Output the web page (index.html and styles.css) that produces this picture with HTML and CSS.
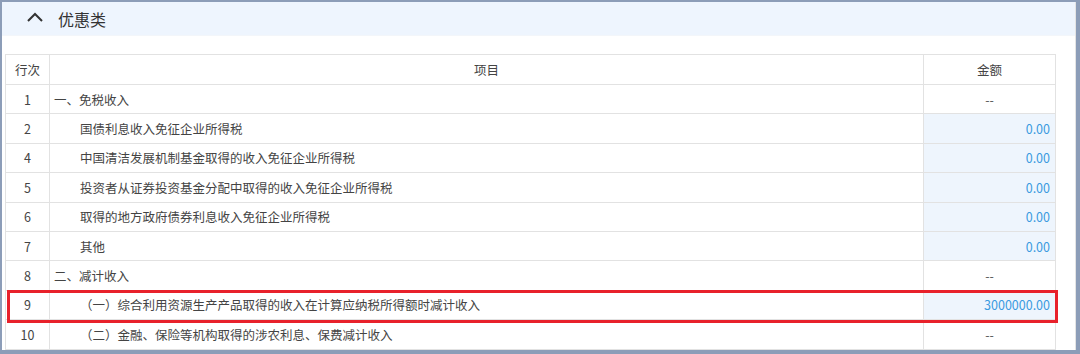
FILE: index.html
```html
<!DOCTYPE html>
<html lang="zh-CN">
<head>
<meta charset="utf-8">
<link rel="stylesheet" href="styles.css">
</head>
<body>
<div class="frame">
  <div class="panel">
    <div class="header">
      <svg class="chev" width="18" height="12" viewBox="0 0 18 12"><polyline points="2,10 9,3 16,10" fill="none" stroke="#333" stroke-width="2"/></svg>
      <span class="title">优惠类</span>
    </div>
    <div class="content">
      <table class="grid">
        <colgroup><col class="c1"><col class="c2"><col class="c3"></colgroup>
        <thead>
          <tr class="head"><th>行次</th><th>项目</th><th>金额</th></tr>
        </thead>
        <tbody>
          <tr><td class="no">1</td><td class="item">一、免税收入</td><td class="amt dash">--</td></tr>
          <tr><td class="no">2</td><td class="item ind">国债利息收入免征企业所得税</td><td class="amt val">0.00</td></tr>
          <tr><td class="no">4</td><td class="item ind">中国清洁发展机制基金取得的收入免征企业所得税</td><td class="amt val">0.00</td></tr>
          <tr><td class="no">5</td><td class="item ind">投资者从证券投资基金分配中取得的收入免征企业所得税</td><td class="amt val">0.00</td></tr>
          <tr><td class="no">6</td><td class="item ind">取得的地方政府债券利息收入免征企业所得税</td><td class="amt val">0.00</td></tr>
          <tr><td class="no">7</td><td class="item ind">其他</td><td class="amt val">0.00</td></tr>
          <tr><td class="no">8</td><td class="item">二、减计收入</td><td class="amt dash">--</td></tr>
          <tr><td class="no">9</td><td class="item ind">（一）综合利用资源生产产品取得的收入在计算应纳税所得额时减计收入</td><td class="amt val">3000000.00</td></tr>
          <tr><td class="no">10</td><td class="item ind">（二）金融、保险等机构取得的涉农利息、保费减计收入</td><td class="amt dash">--</td></tr>
        </tbody>
      </table>
      <div class="mark"></div>
    </div>
  </div>
</div>
</body>
</html>
```
FILE: styles.css
```css
* { box-sizing: border-box; }
html, body { margin: 0; padding: 0; }
body {
  width: 1080px;
  height: 354px;
  overflow: hidden;
  background: #fff;
  font-family: "Noto Sans CJK SC", "Noto Sans", sans-serif;
  color: #333;
}
.frame {
  width: 1080px;
  height: 354px;
  border-style: solid;
  border-color: #8c9db8;
  border-width: 2px 4px 4px 2px;
  background: #fff;
  overflow: hidden;
}
.panel {
  height: 100%;
  border-right: 1px solid #e4e4e4;
}
.header {
  height: 34px;
  background: #eef5fe;
  display: flex;
  align-items: center;
  padding-left: 24px;
  border-bottom: 1px solid #f3f6fa;
}
.chev { display: block; margin-top: -3px; }
.title {
  margin-left: 14px;
  font-size: 16px;
  color: #333;
  line-height: 1;
}
.content {
  position: relative;
  padding: 18px 0 0 3px;
}
.grid {
  width: 1050px;
  border-collapse: collapse;
  table-layout: fixed;
  font-size: 12.5px;
  color: #444;
}
.c1 { width: 44px; }
.c2 { width: 874px; }
.c3 { width: 132px; }
.grid th, .grid td {
  border: 1px solid #e2e2e2;
  padding: 0;
  white-space: nowrap;
  overflow: hidden;
}
.head th {
  height: 30px;
  font-weight: normal;
  text-align: center;
  color: #444;
}
.grid tbody td { height: 29.4px; }
.no { text-align: center; }
.item { padding-left: 4px !important; }
.item.ind { padding-left: 30px !important; }
.amt { text-align: right; padding-right: 5px !important; }
.amt.dash { text-align: center; padding-right: 0 !important; color: #555; }
.amt.val { background: #eef5fd; color: #3a9be0; }
.mark {
  position: absolute;
  left: 5px;
  top: 254px;
  width: 1051px;
  height: 33px;
  border: 3px solid #e8212b;
  pointer-events: none;
}
```
